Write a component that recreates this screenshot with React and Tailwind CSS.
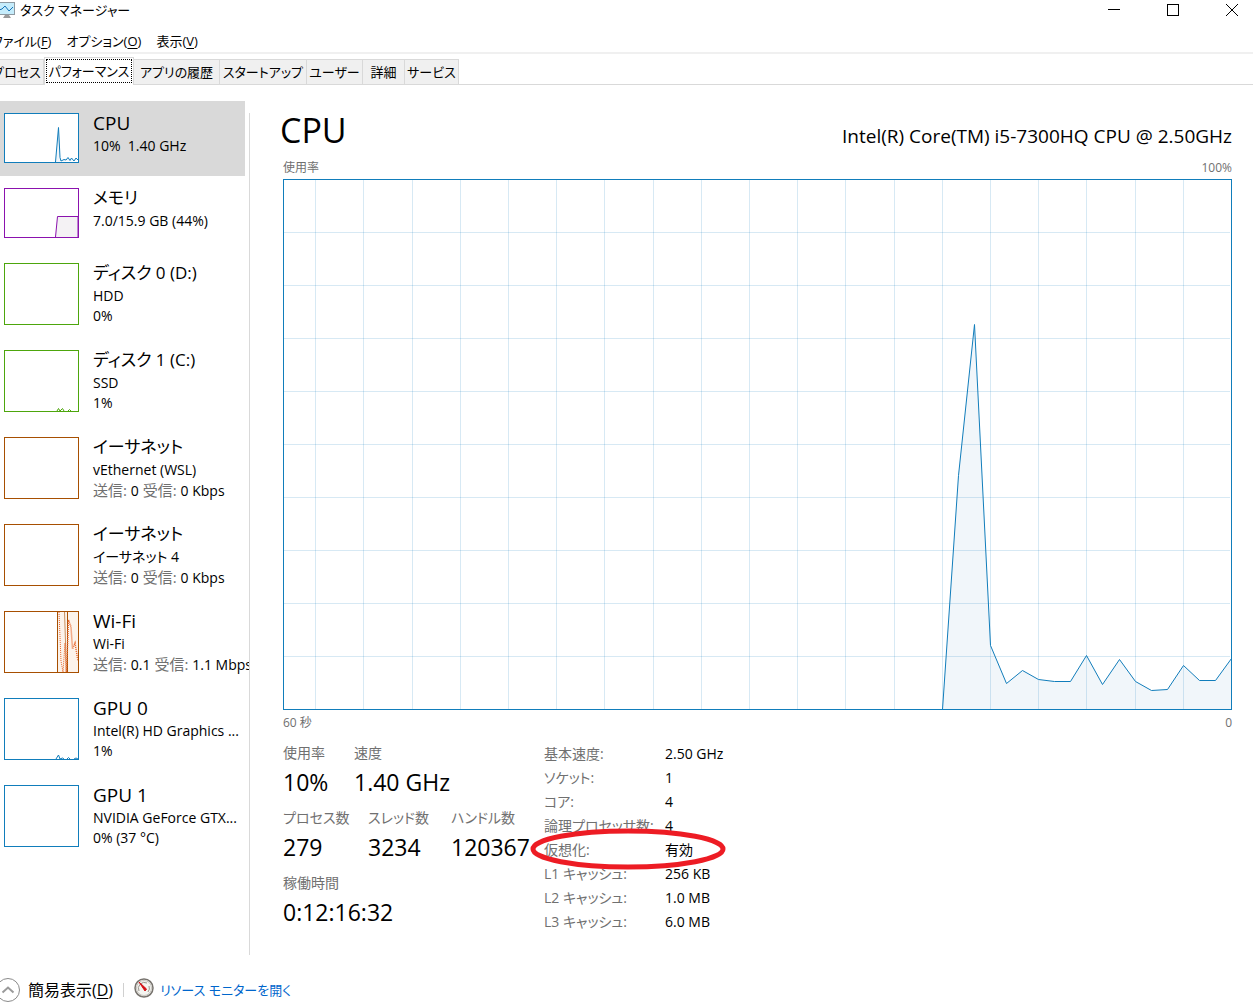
import React from "react";

const menus = [
  { label: "ファイル", hotkey: "F" },
  { label: "オプション", hotkey: "O" },
  { label: "表示", hotkey: "V" },
];

const tabs = [
  { label: "プロセス", width: "w-[54px]" },
  { label: "パフォーマンス", width: "w-[90px]", active: true },
  { label: "アプリの履歴", width: "w-[86px]" },
  { label: "スタートアップ", width: "w-[87px]" },
  { label: "ユーザー", width: "w-[56px]" },
  { label: "詳細", width: "w-[42px]" },
  { label: "サービス", width: "w-[54px]" },
];

const Net = ({ send, receive }) => (
  <>
    <span className="text-[15px] text-[#707070]">送信: </span>{send}
    <span className="text-[15px] text-[#707070]"> 受信: </span>{receive}
  </>
);

const devices = [
  {
    title: "CPU",
    lines: ["10%  1.40 GHz"],
    color: "#117dbb",
    size: "h-[50px]",
    titleSize: "text-[19px]",
    selected: true,
    chart: (
      <path
        d="M51.5 49 L54.5 14.5 L56 44.5 L57 48 L60 46.5 L62 47 L64 44.5 L66 47.5 L67.5 45 L70 48 L72 45 L74 47"
        fill="#f1f6fa"
        stroke="#117dbb"
      />
    ),
  },
  {
    title: "メモリ",
    lines: ["7.0/15.9 GB (44%)"],
    color: "#8b12ae",
    size: "h-[50px]",
    titleSize: "text-[17px]",
    chart: <path d="M51.5 49 L53.5 28.5 H74 V49" fill="#f4f2f4" stroke="#8b12ae" />,
  },
  { title: "ディスク 0 (D:)", lines: ["HDD", "0%"], color: "#4da60c", size: "h-[62px]", titleSize: "text-[17px]" },
  {
    title: "ディスク 1 (C:)",
    lines: ["SSD", "1%"],
    color: "#4da60c",
    size: "h-[62px]",
    titleSize: "text-[17px]",
    chart: <path d="M53 61 L54.5 58.5 L56 61 L58.5 58.5 L60 61 M64 61 L65.5 59.5 L67 61" stroke="#4da60c" />,
  },
  {
    title: "イーサネット",
    lines: ["vEthernet (WSL)", <Net key="net" send="0" receive="0 Kbps" />],
    color: "#a74f01",
    size: "h-[62px]",
    titleSize: "text-[17px]",
  },
  {
    title: "イーサネット",
    lines: ["イーサネット 4", <Net key="net" send="0" receive="0 Kbps" />],
    color: "#a74f01",
    size: "h-[62px]",
    titleSize: "text-[17px]",
  },
  {
    title: "Wi-Fi",
    lines: ["Wi-Fi", <Net key="net" send="0.1" receive="1.1 Mbps" />],
    color: "#a74f01",
    size: "h-[62px]",
    titleSize: "text-[19px]",
    chart: (
      <g fill="none">
        <rect x="53" y="1" width="21" height="60" fill="#fcf3eb" />
        <path d="M53.5 61 V1 M63.5 61 V1" stroke="#a74f01" />
        <path d="M60.5 1 L62.5 61" stroke="#a74f01" strokeOpacity="0.6" />
        <path d="M55 1 L57 50 L59 61 L61 32 L62 61" stroke="#e8652a" strokeDasharray="1 1" />
        <path d="M62.5 61 L64.5 9 L67 16 L68.5 38 L71 32 L74 50" stroke="#e8652a" strokeWidth="1.5" strokeDasharray="1 1" />
      </g>
    ),
  },
  {
    title: "GPU 0",
    lines: ["Intel(R) HD Graphics ...", "1%"],
    color: "#117dbb",
    size: "h-[62px]",
    titleSize: "text-[19px]",
    chart: <path d="M52 61 L54.5 57 L56 61 L58.5 60 L60 61 M63 61 L64.5 59.5 L66 61 M70 61 L72 60 L74 61" stroke="#117dbb" />,
  },
  {
    title: "GPU 1",
    lines: ["NVIDIA GeForce GTX...", "0% (37 °C)"],
    color: "#117dbb",
    size: "h-[62px]",
    titleSize: "text-[19px]",
  },
];

const gridX = [32, 80, 129, 177, 225, 273, 321, 370, 418, 466, 514, 562, 611, 659, 707, 755, 803, 852, 900];
const gridY = [53, 106, 159, 212, 265, 318, 371, 424, 477];

// Usage samples, newest at the right edge
const usage = [
  [659, 530], [675, 296], [691, 145], [707, 466], [723, 504], [739, 491], [755, 500],
  [771, 502], [787, 502], [803, 476], [819, 505], [836, 480], [852, 502], [868, 511],
  [884, 510], [900, 486], [916, 501], [932, 501], [948, 479],
];
const usagePoints = usage.map(([x, y]) => `${x + 0.5},${y + 0.5}`).join(" ");

const statRows = [
  [
    { label: "使用率", value: "10%", width: "w-[71px]" },
    { label: "速度", value: "1.40 GHz", width: "w-[120px]" },
  ],
  [
    { label: "プロセス数", value: "279", width: "w-[85px]" },
    { label: "スレッド数", value: "3234", width: "w-[83px]" },
    { label: "ハンドル数", value: "120367", width: "w-[92px]" },
  ],
  [{ label: "稼働時間", value: "0:12:16:32", width: "w-[120px]" }],
];

const details = [
  ["基本速度:", "2.50 GHz"],
  ["ソケット:", "1"],
  ["コア:", "4"],
  ["論理プロセッサ数:", "4"],
  ["仮想化:", "有効"],
  ["L1 キャッシュ:", "256 KB"],
  ["L2 キャッシュ:", "1.0 MB"],
  ["L3 キャッシュ:", "6.0 MB"],
];

const TitleBar = () => (
  <header className="flex h-5 items-center justify-between">
    <div className="flex items-center gap-1">
      <svg className="-ml-0.5 size-[18px]" viewBox="0 0 18 18" fill="none" aria-hidden="true">
        <rect x="0.5" y="1.5" width="16" height="12" fill="#c5ecfb" stroke="#8e9aa2" />
        <path d="M1 9 L4 8 L7 5 L11 10 L15 6" stroke="#1673b8" />
        <path d="M7 14 H11 L13 17 H5 Z" fill="#9a9a9a" />
      </svg>
      <h1 className="text-[13px] leading-5">タスク マネージャー</h1>
    </div>
    <div className="flex gap-[47px] pr-[15px]">
      <button type="button" aria-label="最小化">
        <svg className="size-3" viewBox="0 0 12 12" stroke="black"><path d="M0 5.5 H12" /></svg>
      </button>
      <button type="button" aria-label="最大化">
        <svg className="size-3" viewBox="0 0 12 12" fill="none" stroke="black"><rect x="0.5" y="0.5" width="11" height="11" /></svg>
      </button>
      <button type="button" aria-label="閉じる">
        <svg className="size-3" viewBox="0 0 12 12" stroke="black"><path d="M0 0 L12 12 M12 0 L0 12" /></svg>
      </button>
    </div>
  </header>
);

const MenuBar = () => (
  <nav className="-ml-2 flex h-[34px] items-center gap-[15px] border-b-2 border-[#f0f0f0] pt-[10px] text-[13px] leading-5">
    {menus.map((menu) => (
      <button key={menu.hotkey} type="button">
        {menu.label}(<span className="underline underline-offset-2">{menu.hotkey}</span>)
      </button>
    ))}
  </nav>
);

const TabStrip = () => (
  <div role="tablist" className="flex h-[31px] items-end border-b border-[#d9d9d9] text-[13px] leading-5">
    <div className="-mb-px -ml-[10px] flex items-end">
      {tabs.map((tab) =>
        tab.active ? (
          <button
            key={tab.label}
            type="button"
            role="tab"
            aria-selected="true"
            className={`${tab.width} h-[28px] border border-b-0 border-[#d9d9d9] bg-white px-px pt-px pb-0.5`}
          >
            <span className="flex h-full items-center justify-center border border-dotted border-black">{tab.label}</span>
          </button>
        ) : (
          <button
            key={tab.label}
            type="button"
            role="tab"
            aria-selected="false"
            className={`${tab.width} flex h-[26px] items-center justify-center border border-l-0 border-[#d9d9d9] bg-[#f0f0f0]`}
          >
            {tab.label}
          </button>
        )
      )}
    </div>
  </div>
);

const DeviceItem = ({ device }) => (
  <li>
    <button
      type="button"
      className={`flex w-[245px] gap-[14px] pl-1 text-left ${device.selected ? "bg-[#d9d9d9]" : ""}`}
    >
      <svg className={`mt-3 mb-[13px] w-[75px] shrink-0 ${device.size}`} fill="none" aria-hidden="true">
        <rect width="100%" height="100%" fill="white" />
        {device.chart}
        <rect width="100%" height="100%" stroke={device.color} strokeWidth="2" />
      </svg>
      <span className="block pt-[9px] text-sm leading-5">
        <span className={`block leading-[26px] ${device.titleSize}`}>{device.title}</span>
        {device.lines.map((line, index) => (
          <span key={index} className="block h-5 whitespace-pre">{line}</span>
        ))}
      </span>
    </button>
  </li>
);

const UsageChart = () => (
  <svg className="block h-[531px] w-full" viewBox="0 0 949 531" preserveAspectRatio="none" fill="none" role="img" aria-label="CPU 使用率">
    <polygon points={`${usagePoints} 948.5,530.5`} fill="#f1f6fa" />
    <g stroke="#117dbb" strokeOpacity="0.17">
      {gridX.map((x) => (
        <path key={x} d={`M${x + 0.5} 1 V530`} />
      ))}
      {gridY.map((y) => (
        <path key={y} d={`M1 ${y + 0.5} H947`} />
      ))}
    </g>
    <polyline points={usagePoints} stroke="#117dbb" />
    <rect x="0.5" y="0.5" width="948" height="530" stroke="#117dbb" />
  </svg>
);

const Statistics = () => (
  <div className="flex pt-[9px]">
    <div className="w-[261px] pt-px">
      {statRows.map((row, index) => (
        <dl key={index} className="flex h-[65px]">
          {row.map((stat) => (
            <div key={stat.label} className={stat.width}>
              <dt className="text-sm leading-5 text-[#707070]">{stat.label}</dt>
              <dd className="text-[23px] leading-[38px]">{stat.value}</dd>
            </div>
          ))}
        </dl>
      ))}
    </div>
    <dl className="relative text-sm leading-6">
      {details.map(([label, value]) => (
        <div key={label} className="flex">
          <dt className="w-[121px] text-[#707070]">{label}</dt>
          <dd>{value}</dd>
        </div>
      ))}
      {/* Hand-drawn ring around the virtualization row */}
      <svg className="absolute top-[84px] -left-[14px] h-[46px] w-[198px]" viewBox="0 0 198 46" fill="none" aria-hidden="true">
        <ellipse cx="98" cy="23" rx="95" ry="18" stroke="#ed1c24" strokeWidth="5" />
      </svg>
    </dl>
  </div>
);

const Footer = () => (
  <footer className="flex h-12 items-end pb-px leading-6">
    <button type="button" className="-ml-1 flex gap-2 text-base leading-6">
      <svg className="size-6" viewBox="0 0 24 24" fill="none" aria-hidden="true">
        <circle cx="12" cy="12" r="11.5" stroke="#8a8a8a" />
        <path d="M6.5 14.5 L12 9.5 L17.5 14.5" stroke="#9a9a9a" strokeWidth="2" />
      </svg>
      <span>
        簡易表示(<span className="underline underline-offset-2">D</span>)
      </span>
    </button>
    <span className="mx-[10px] mb-[5px] h-[14px] w-px bg-[#d0d0d0]" />
    <a href="#resource-monitor" className="flex gap-1.5 text-[13px] leading-6 text-[#0066cc]">
      <svg className="size-5" viewBox="0 0 20 20" fill="none" aria-hidden="true">
        <circle cx="10" cy="10" r="9" fill="#f4f4f0" stroke="#77736e" strokeWidth="1.5" />
        <circle cx="10" cy="10" r="7.5" stroke="#c9c6c0" />
        <path d="M5 13 A6 6 0 0 1 13 5 M15 8 A6 6 0 0 1 14 14" stroke="#9a958e" />
        <path d="M5 4 L12.5 11 L11 13 Z" fill="#d40f14" stroke="#d40f14" />
      </svg>
      リソース モニターを開く
    </a>
  </footer>
);

const App = () => {
  return (
    <div className="flex min-h-screen flex-col overflow-hidden bg-white font-['Open_Sans','Noto_Sans_CJK_JP',sans-serif] whitespace-nowrap text-black [font-feature-settings:'palt']">
      <TitleBar />
      <MenuBar />
      <TabStrip />
      <div className="flex grow">
        <aside className="w-[249px] shrink-0 overflow-hidden pt-4">
          <ul>
            {devices.map((device, index) => (
              <DeviceItem key={index} device={device} />
            ))}
          </ul>
        </aside>
        <div className="mt-7 w-px shrink-0 bg-[#d9d9d9]" />
        <main className="grow pt-[22px] pr-[21px] pl-[33px]">
          <div className="flex h-[50px] items-baseline justify-between">
            <h2 className="-ml-[3px] text-[34px] leading-[46px]">CPU</h2>
            <p className="text-[19px] leading-7">Intel(R) Core(TM) i5-7300HQ CPU @ 2.50GHz</p>
          </div>
          <div className="flex justify-between pb-px text-xs leading-[21px] text-[#707070]">
            <span>使用率</span>
            <span>100%</span>
          </div>
          <UsageChart />
          <div className="flex justify-between pt-0.5 text-xs leading-[21px] text-[#707070]">
            <span>60 秒</span>
            <span>0</span>
          </div>
          <Statistics />
        </main>
      </div>
      <Footer />
    </div>
  );
};

export default App;
